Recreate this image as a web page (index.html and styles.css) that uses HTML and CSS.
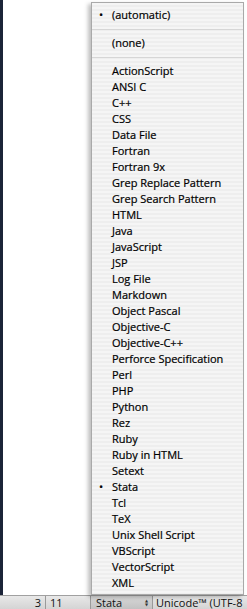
FILE: index.html
```html
<!DOCTYPE html>
<html lang="en">
<head>
  <meta charset="UTF-8" />
  <title>Syntax menu</title>
  <link rel="stylesheet" href="styles.css">
</head>
<body>

  <div class="window">
    <div class="editor">

      <!-- popup menu of languages -->
      <ul class="menu">
        <li class="checked">(automatic)</li>
        <li class="sep"></li>
        <li>(none)</li>
        <li class="sep"></li>
        <li>ActionScript</li>
        <li>ANSI C</li>
        <li>C++</li>
        <li>CSS</li>
        <li>Data File</li>
        <li>Fortran</li>
        <li>Fortran 9x</li>
        <li>Grep Replace Pattern</li>
        <li>Grep Search Pattern</li>
        <li>HTML</li>
        <li>Java</li>
        <li>JavaScript</li>
        <li>JSP</li>
        <li>Log File</li>
        <li>Markdown</li>
        <li>Object Pascal</li>
        <li>Objective-C</li>
        <li>Objective-C++</li>
        <li>Perforce Specification</li>
        <li>Perl</li>
        <li>PHP</li>
        <li>Python</li>
        <li>Rez</li>
        <li>Ruby</li>
        <li>Ruby in HTML</li>
        <li>Setext</li>
        <li class="checked">Stata</li>
        <li>Tcl</li>
        <li>TeX</li>
        <li>Unix Shell Script</li>
        <li>VBScript</li>
        <li>VectorScript</li>
        <li>XML</li>
      </ul>
    </div>

    <div class="status">
      <span class="cell line">3</span>
      <span class="cell col">11</span>
      <span class="cell lang">Stata <span class="arrows">&#9650;<br>&#9660;</span></span>
      <span class="cell enc">Unicode™ (UTF-8</span>
    </div>
  </div>

</body>
</html>
```

FILE: styles.css
```css
body {
  margin: 0;
  width: 247px;
  height: 609px;
  overflow: hidden;
  background: #fff;
  font-family: "Open Sans", "DejaVu Sans", sans-serif;
  font-size: 11px;
  color: #000;
}

.window {
  display: flex;
  flex-direction: column;
  height: 609px;
}

.editor {
  flex: 1;
  position: relative;
  background: #fff;
  border-left: 3px solid #1b2438;
}

/* menu pops up over the editor */
.menu {
  position: absolute;
  left: 88px;
  top: 2px;
  width: 151px;
  margin: 0;
  padding: 4px 0 3px;
  list-style: none;
  background: repeating-linear-gradient(#f5f5f5 0, #f5f5f5 2px, #eeeeee 2px, #eeeeee 4px);
  border: 1px solid #a9a9a9;
  box-shadow: -3px 2px 4px rgba(0, 0, 0, 0.25);
  z-index: 10;
}

.menu li {
  position: relative;
  height: 16px;
  line-height: 16px;
  padding-left: 20px;
  white-space: nowrap;
  -webkit-text-stroke: 0.2px #000;
}

.menu li.checked::before {
  content: "•";
  position: absolute;
  left: 7px;
}

.menu li.sep {
  box-sizing: border-box;
  height: 12px;
  padding: 6px 0 0;
}

.menu li.sep::after {
  content: "";
  display: block;
  height: 1px;
  background: #d6d6d6;
}

.status {
  display: flex;
  height: 13px;
  line-height: 13px;
  background: linear-gradient(#e8e8e8, #d4d4d4);
  border-top: 1px solid #a0a0a0;
  color: #111;
}

.cell {
  border-right: 1px solid #9a9a9a;
  white-space: nowrap;
}

.line {
  width: 41px;
  text-align: right;
  padding-right: 4px;
}

.col {
  width: 40px;
  padding-left: 4px;
}

.lang {
  display: flex;
  align-items: center;
  width: 56px;
  padding-left: 5px;
  background: linear-gradient(#d8d8d8, #c2c2c2);
}

.arrows {
  margin-left: auto;
  margin-right: 4px;
  font-size: 4px;
  line-height: 4px;
  color: #333;
}

.enc {
  flex: 1;
  padding-left: 3px;
  border-right: none;
  overflow: hidden;
}
```
